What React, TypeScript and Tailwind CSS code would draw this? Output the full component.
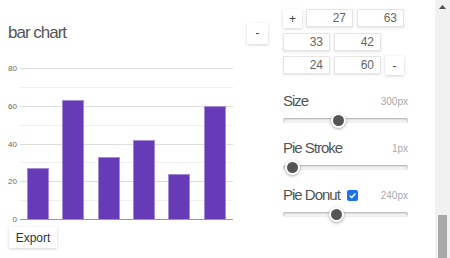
import React from "react";

const values = [27, 63, 33, 42, 24, 60];
const barX = [27, 62, 98, 133, 168, 204];
const yOf = (v: number) => 159 - v * 1.8875;

function Chart() {
  return (
    <svg width={240} height={165} className="block">
      {[70, 50, 30, 10].map((v) => (
        <line key={v} x1={20} x2={233} y1={Math.round(yOf(v)) + 0.5} y2={Math.round(yOf(v)) + 0.5} stroke="#f0f0f0" strokeWidth={1} />
      ))}
      {[80, 60, 40, 20].map((v) => (
        <line key={v} x1={20} x2={233} y1={Math.round(yOf(v)) + 0.5} y2={Math.round(yOf(v)) + 0.5} stroke="#dddddd" strokeWidth={1} />
      ))}
      {[80, 60, 40, 20, 0].map((v) => (
        <text key={v} x={17} y={Math.round(yOf(v)) + 3} textAnchor="end" fontSize={8} fill="#666" fontFamily="Liberation Sans, Arial, sans-serif">
          {v}
        </text>
      ))}
      {values.map((v, i) => (
        <rect key={i} x={barX[i] + 0.5} y={Math.round(yOf(v)) + 0.5} width={21} height={159 - Math.round(yOf(v))} fill="#673ab7" stroke="#a58bd6" strokeWidth={1} />
      ))}
      <line x1={20} x2={233} y1={159.5} y2={159.5} stroke="#999" strokeWidth={1} />
    </svg>
  );
}

function NumBox({ v }: { v: number }) {
  return (
    <div className="w-[47px] h-[18px] bg-white border border-[#e6e6e6] shadow-[0_1px_2px_rgba(0,0,0,0.12)] flex items-center justify-end pr-[6px] text-[12px] text-[#666]">
      {v}
    </div>
  );
}

function SmallBtn({ label }: { label: string }) {
  return (
    <div className="w-[19px] h-[19px] bg-white shadow-[0_1px_3px_rgba(0,0,0,0.18)] flex items-center justify-center text-[12px] text-[#444]">
      {label}
    </div>
  );
}

function Slider({ left }: { left: number }) {
  return (
    <div className="relative h-[19px] w-[125px] flex items-center">
      <div className="w-full h-[5px] rounded-full bg-[#f3f3f3] shadow-[inset_0_1px_2px_rgba(0,0,0,0.3)]" />
      <div
        className="absolute top-[2px] w-[15px] h-[15px] rounded-full bg-[#555] border-2 border-white shadow-[0_1px_3px_rgba(0,0,0,0.35)]"
        style={{ left }}
      />
    </div>
  );
}

function Label({ text, value, check }: { text: string; value: string; check?: boolean }) {
  return (
    <div className="h-[20px] w-[125px] flex items-center justify-between">
      <div className="flex items-center gap-[7px]">
        <span className="text-[15px] tracking-[-1px] text-[#555]">{text}</span>
        {check && (
          <span className="w-[11px] h-[11px] rounded-[2px] bg-[#1a73e8] flex items-center justify-center">
            <svg width="9" height="9" viewBox="0 0 10 10">
              <path d="M2 5.2 L4.2 7.3 L8.2 2.8" fill="none" stroke="white" strokeWidth="1.6" />
            </svg>
          </span>
        )}
      </div>
      <span className="text-[10px] text-[#aaa]">{value}</span>
    </div>
  );
}

export default function App() {
  return (
    <div className="w-[450px] h-[258px] overflow-hidden bg-white flex" style={{ fontFamily: '"Liberation Sans", Arial, sans-serif' }}>
      <div className="flex-1 flex">
        <div className="w-[283px] flex flex-col">
          <div className="mt-[22px] h-[22px] w-[268px] pl-[8px] flex items-center justify-between">
            <span className="text-[17px] tracking-[-1px] text-[#555]">bar chart</span>
            <div className="w-[21px] h-[21px] bg-white shadow-[0_1px_3px_rgba(0,0,0,0.18)] flex items-center justify-center text-[12px] text-[#444]">-</div>
          </div>
          <div className="mt-[16px]">
            <Chart />
          </div>
          <div className="mt-[2px] ml-[9px] w-[48px] h-[21px] bg-white shadow-[0_1px_3px_rgba(0,0,0,0.18)] flex items-center justify-center text-[12px] text-[#333]">
            Export
          </div>
        </div>
        <div className="flex flex-col pt-[9px]">
          <div className="flex flex-col gap-[5px]">
            <div className="flex gap-[4px]">
              <SmallBtn label="+" />
              <NumBox v={27} />
              <NumBox v={63} />
            </div>
            <div className="flex gap-[4px]">
              <NumBox v={33} />
              <NumBox v={42} />
            </div>
            <div className="flex gap-[4px]">
              <NumBox v={24} />
              <NumBox v={60} />
              <SmallBtn label="-" />
            </div>
          </div>
          <div className="mt-[16px] flex flex-col gap-[8px]">
            <div>
              <Label text="Size" value="300px" />
              <Slider left={48} />
            </div>
            <div>
              <Label text="Pie Stroke" value="1px" />
              <Slider left={2} />
            </div>
            <div>
              <Label text="Pie Donut" value="240px" check />
              <Slider left={46} />
            </div>
          </div>
        </div>
      </div>
      <div className="w-[15px] h-full bg-[#f1f1f1] flex flex-col items-center justify-between">
        <div className="pt-[5px]">
          <svg width="7" height="4" viewBox="0 0 7 4">
            <path d="M0 4 L3.5 0 L7 4 Z" fill="#505050" />
          </svg>
        </div>
        <div className="w-[9px] h-[43px] bg-[#a8a8a8]" />
      </div>
    </div>
  );
}
